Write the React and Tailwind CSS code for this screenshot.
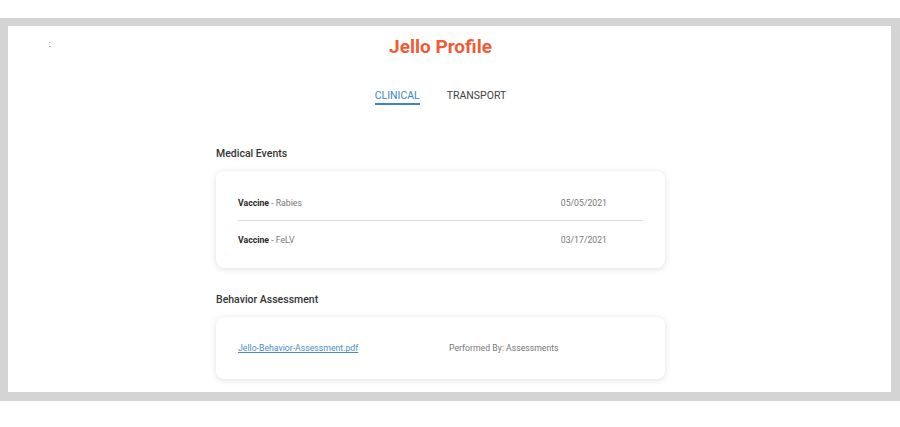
import React from "react";

export default function App() {
  const font = { fontFamily: "Roboto, 'Liberation Sans', sans-serif" };
  return (
    <div className="w-[900px] h-[427px] bg-white pt-[18px]" style={font}>
      <div className="bg-[#d4d4d4] pt-[8px] pb-[9px] pl-[8px] pr-[9px]">
        <div className="relative bg-white h-[366px]">
          <div className="absolute left-[41px] top-[16px] flex flex-col gap-[3px]">
            <span className="block w-[1px] h-[1px] bg-[#9fb8d6]" />
            <span className="block w-[2px] h-[1px] bg-[#9fb8d6]" />
          </div>
          <div className="ml-[208px] w-[449px] flex flex-col">
            <h1 className="mt-[10px] h-[22px] leading-[22px] text-center text-[19px] font-bold text-[#f05a35]">
              Jello Profile
            </h1>
            <div className="mt-[32px] flex justify-center gap-[27px] text-[10.5px] leading-[12px]">
              <span className="pb-[1px] border-b-2 border-[#3b87c3] text-[#3b87c3]">CLINICAL</span>
              <span className="pb-[1px] border-b-2 border-transparent text-[#444]">TRANSPORT</span>
            </div>
            <h2 className="mt-[42px] text-[10.5px] leading-[14px] font-medium text-[#333]">
              Medical Events
            </h2>
            <div className="mt-[10px] rounded-[8px] bg-white shadow-[0_1px_6px_rgba(0,0,0,0.13)] px-[22px] pt-[14px] pb-[11px]">
              <div className="h-[36px] pt-[3px] flex items-center justify-between border-b border-[#dedede] text-[8.7px]">
                <span className="text-[#777]">
                  <span className="font-bold text-[#2a2a2a]">Vaccine</span> - Rabies
                </span>
                <span className="pr-[36px] text-[#777]">05/05/2021</span>
              </div>
              <div className="h-[36px] pt-[3px] flex items-center justify-between text-[8.7px]">
                <span className="text-[#777]">
                  <span className="font-bold text-[#2a2a2a]">Vaccine</span> - FeLV
                </span>
                <span className="pr-[36px] text-[#777]">03/17/2021</span>
              </div>
            </div>
            <h2 className="mt-[25px] text-[10.5px] leading-[14px] font-medium text-[#333]">
              Behavior Assessment
            </h2>
            <div className="mt-[10px] rounded-[8px] bg-white shadow-[0_1px_6px_rgba(0,0,0,0.13)] px-[22px] pt-[25px] pb-[23px]">
              <div className="h-[14px] flex items-center text-[8.7px]">
                <a className="w-[211px] text-[#4a8bc9] underline">Jello-Behavior-Assessment.pdf</a>
                <span className="text-[#777]">Performed By: Assessments</span>
              </div>
            </div>
          </div>
        </div>
      </div>
    </div>
  );
}
